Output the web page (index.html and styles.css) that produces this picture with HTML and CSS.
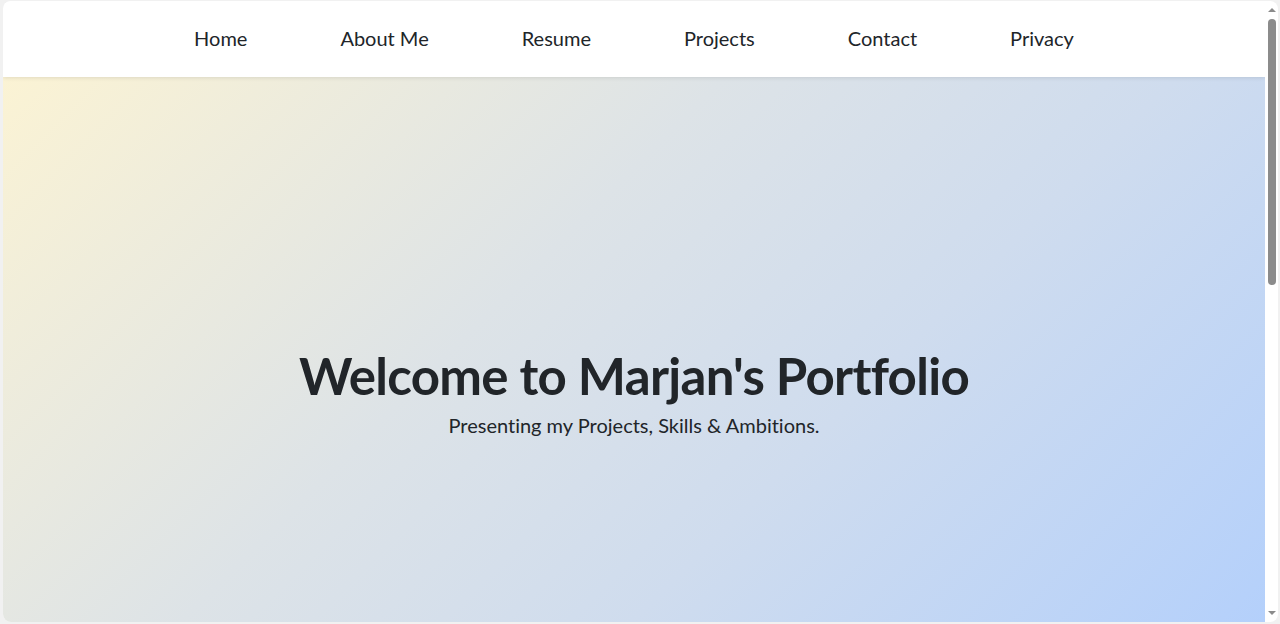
FILE: index.html
```html
<!DOCTYPE html>
<html lang="en">
<head>
<meta charset="utf-8">
<title>Marjan's Portfolio</title>
<link rel="stylesheet" href="styles.css">
</head>
<body>
<div class="window">
  <div class="page">
    <nav class="navbar">
      <a href="#" class="nav-link">Home</a>
      <a href="#" class="nav-link">About Me</a>
      <a href="#" class="nav-link">Resume</a>
      <a href="#" class="nav-link">Projects</a>
      <a href="#" class="nav-link">Contact</a>
      <a href="#" class="nav-link">Privacy</a>
    </nav>
    <section class="hero">
      <h1 class="hero-title">Welcome to Marjan's Portfolio</h1>
      <p class="hero-lead">Presenting my Projects, Skills &amp; Ambitions.</p>
    </section>
  </div>
  <div class="scrollbar">
    <span class="arrow up"></span>
    <div class="track"><div class="thumb"></div></div>
    <span class="arrow down"></span>
  </div>
</div>
</body>
</html>
```
FILE: styles.css
```css
* { box-sizing: border-box; }
html, body { margin: 0; padding: 0; height: 100%; }
body {
  background: #f1f1f1;
  font-family: "Segoe UI", "Lato", "Open Sans", sans-serif;
  font-variant-ligatures: none;
  color: #212529;
  overflow: hidden;
}
.window {
  height: 624px;
  width: 1280px;
  padding: 1px 2px 2px 3px;
  display: flex;
  background: #f1f1f1;
}
.page {
  flex: 1;
  display: flex;
  flex-direction: column;
  background: #ffffff;
  border-radius: 8px 0 0 8px;
  overflow: hidden;
}
.navbar {
  height: 76px;
  flex: none;
  background: #ffffff;
  display: flex;
  justify-content: center;
  align-items: center;
  gap: 93px;
  padding-bottom: 3px;
  box-shadow: 0 1px 4px rgba(0,0,0,0.10);
  position: relative;
  z-index: 1;
}
.nav-link {
  font-size: 20px;
  color: #212529;
  text-decoration: none;
}
.hero {
  flex: 1;
  background: linear-gradient(135deg, #fbf3d4 0%, #dde3e7 40%, #cfdcee 65%, #b4d0fb 100%);
  display: flex;
  flex-direction: column;
  align-items: center;
  padding-top: 268px;
}
.hero-title {
  margin: 0 0 4px;
  font-size: 51px;
  font-weight: 700;
  letter-spacing: -0.7px;
  line-height: 1.2;
}
.hero-lead {
  margin: 0;
  font-size: 20px;
  line-height: 1.5;
}
.scrollbar {
  width: 13px;
  flex: none;
  background: #ffffff;
  display: flex;
  flex-direction: column;
  align-items: center;
  border-radius: 0 8px 8px 0;
}
.arrow {
  width: 0; height: 0;
  border-left: 4px solid transparent;
  border-right: 4px solid transparent;
  flex: none;
}
.arrow.up { border-bottom: 4px solid #8b8b8b; margin-top: 7px; }
.arrow.down { border-top: 4px solid #8b8b8b; margin-bottom: 7px; }
.track { flex: 1; width: 100%; display: flex; justify-content: center; padding-top: 7px; }
.thumb { width: 8px; height: 266px; background: #8b8b8b; border-radius: 4px; }
```
